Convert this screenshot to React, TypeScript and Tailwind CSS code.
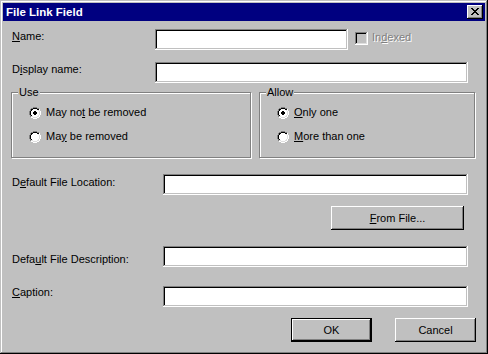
import React from 'react';

const RADIO = [
  '....GGGG....',
  '..GGKKKKGG..',
  '.GKKWWWWKKH.',
  '.GKWWWWWWLH.',
  'GKWWWWWWWWLH',
  'GKWWWWWWWWLH',
  'GKWWWWWWWWLH',
  'GKWWWWWWWWLH',
  '.GKWWWWWWLH.',
  '.GLLWWWWLLH.',
  '..HHLLLLHH..',
  '....HHHH....',
];
const DOT = ['.DD.', 'DDDD', 'DDDD', '.DD.'];
const COLORS: Record<string, string> = { G: '#808080', K: '#000', W: '#fff', H: '#fff', L: '#dfdfdf', D: '#000' };

function Pixels({ rows, dx = 0, dy = 0 }: { rows: string[]; dx?: number; dy?: number }) {
  return (
    <>
      {rows.flatMap((row, y) =>
        row.split('').map((c, x) =>
          c === '.' ? null : <rect key={`${x}-${y}`} x={x + dx} y={y + dy} width="1" height="1" fill={COLORS[c]} />
        )
      )}
    </>
  );
}

function Radio({ checked, label }: { checked?: boolean; label: React.ReactNode }) {
  return (
    <div className="flex items-center h-[13px]">
      <svg width="12" height="12" viewBox="0 0 12 12" shapeRendering="crispEdges" className="shrink-0">
        <Pixels rows={RADIO} />
        {checked && <Pixels rows={DOT} dx={4} dy={4} />}
      </svg>
      <span className="ml-[5px] whitespace-nowrap">{label}</span>
    </div>
  );
}

const sunken = 'bg-white shadow-[inset_-1px_-1px_#fff,inset_1px_1px_#808080,inset_-2px_-2px_#c0c0c0,inset_2px_2px_#000]';
const raised = 'shadow-[inset_-1px_-1px_#000,inset_1px_1px_#fff,inset_-2px_-2px_#808080]';

function Field({ width }: { width: string }) {
  return <div className={`${width} h-[21px] shrink-0 ${sunken}`} />;
}

function GroupBox({ title, width, children }: { title: string; width: string; children: React.ReactNode }) {
  return (
    <div className={`relative ${width} h-[66px] shrink-0 border border-[#808080] shadow-[1px_1px_0_#fff,inset_1px_1px_0_#fff]`}>
      <span className="absolute left-[6px] top-[-7px] px-[1px] bg-[#c0c0c0]">{title}</span>
      <div className="flex flex-col gap-[11px] pt-[13px] pl-[17px]">{children}</div>
    </div>
  );
}

function Button({ children, width, isDefault }: { children: React.ReactNode; width: string; isDefault?: boolean }) {
  return (
    <div className={`${width} h-[24px] shrink-0 ${isDefault ? 'border border-black' : ''}`}>
      <div className={`h-full flex items-center justify-center ${raised}`}>{children}</div>
    </div>
  );
}

export default function App() {
  return (
    <div className="w-[488px] h-[354px] p-[3px] flex flex-col bg-[#c0c0c0] text-black text-[11px] leading-[13px] font-['Liberation_Sans',Arial,sans-serif] shadow-[inset_-1px_-1px_#000,inset_1px_1px_#c0c0c0,inset_-2px_-2px_#808080,inset_2px_2px_#fff]">
      <div className="h-[18px] shrink-0 bg-[#000080] flex items-center justify-between pl-[3px] pr-[2px]">
        <span className="text-white font-bold text-[11.5px]">File Link Field</span>
        <div className={`w-[16px] h-[14px] bg-[#c0c0c0] flex items-center justify-center ${raised}`}>
          <svg width="16" height="14" viewBox="0 0 16 14" shapeRendering="crispEdges">
            <path d="M4 3h2v1H4zM10 3h2v1h-2zM5 4h2v1H5zM9 4h2v1H9zM6 5h4v1H6zM7 6h2v1H7zM6 7h4v1H6zM5 8h2v1H5zM9 8h2v1H9zM4 9h2v1H4zM10 9h2v1h-2z" fill="#000" />
          </svg>
        </div>
      </div>

      <div className="flex flex-col px-[8px]">
        <div className="flex items-start mt-[8px]">
          <span className="w-[144px] pl-[1px] mt-[1px] shrink-0"><u className="underline">N</u>ame:</span>
          <Field width="w-[193px]" />
          <div className="ml-[7px] mt-[3px] w-[13px] h-[13px] bg-[#c0c0c0] shadow-[inset_-1px_-1px_#fff,inset_1px_1px_#808080,inset_-2px_-2px_#dfdfdf,inset_2px_2px_#000]" />
          <span className="ml-[4px] mt-[2px] text-[#808080] [text-shadow:1px_1px_0_#fff]">
            In<u className="underline">d</u>exed
          </span>
        </div>

        <div className="flex items-start mt-[12px]">
          <span className="w-[144px] pl-[1px] mt-[1px] shrink-0">D<u className="underline">i</u>splay name:</span>
          <Field width="w-[313px]" />
        </div>

        <div className="flex gap-[8px] mt-[9px]">
          <GroupBox title="Use" width="w-[240px]">
            <Radio checked label={<>May no<u className="underline">t</u> be removed</>} />
            <Radio label={<>Ma<u className="underline">y</u> be removed</>} />
          </GroupBox>
          <GroupBox title="Allow" width="w-[216px]">
            <Radio checked label={<><u className="underline">O</u>nly one</>} />
            <Radio label={<><u className="underline">M</u>ore than one</>} />
          </GroupBox>
        </div>

        <div className="flex items-start mt-[16px]">
          <span className="w-[152px] pl-[1px] mt-[2px] shrink-0">D<u className="underline">e</u>fault File Location:</span>
          <Field width="w-[305px]" />
        </div>

        <div className="flex mt-[11px] pl-[320px]">
          <Button width="w-[133px]"><span><u className="underline">F</u>rom File...</span></Button>
        </div>

        <div className="flex items-start mt-[16px]">
          <span className="w-[152px] pl-[1px] mt-[7px] shrink-0">Defa<u className="underline">u</u>lt File Description:</span>
          <Field width="w-[305px]" />
        </div>

        <div className="flex items-start mt-[19px]">
          <span className="w-[152px] pl-[1px] mt-[0px] shrink-0"><u className="underline">C</u>aption:</span>
          <Field width="w-[305px]" />
        </div>

        <div className="flex mt-[11px] pl-[280px] gap-[23px]">
          <Button width="w-[81px]" isDefault>OK</Button>
          <Button width="w-[81px]">Cancel</Button>
        </div>
      </div>
    </div>
  );
}
